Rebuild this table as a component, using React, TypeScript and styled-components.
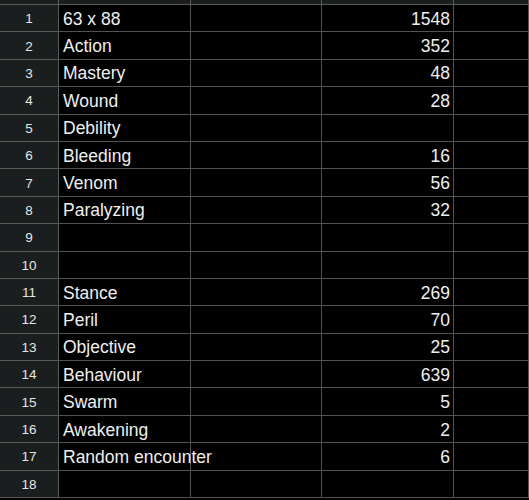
import React from 'react';
import styled, { createGlobalStyle } from 'styled-components';

const GlobalStyle = createGlobalStyle`
  html, body {
    margin: 0;
    padding: 0;
    background: #000000;
  }
  body {
    font-family: "Liberation Sans", Arial, sans-serif;
    color: #efefef;
  }
`

const Sheet = styled.div`
  display: flex;
  flex-direction: column;
  width: 529px;
  overflow: hidden;
`

const Row = styled.div<{ $head?: boolean }>`
  display: grid;
  grid-template-columns: 59px 132px 131px 132px 1fr;
  height: ${p => (p.$head ? '5px' : '27.4px')};
  background: ${p => (p.$head ? '#1b1e1e' : '#000000')};
`

const RowNum = styled.div`
  display: flex;
  align-items: center;
  justify-content: center;
  background: #1b1e1e;
  border-right: 1px solid #5a5a5a;
  border-bottom: 1px solid #5a5a5a;
  font-size: 13.5px;
  color: #e6e6e6;
  padding-top: 1px;
`

const Cell = styled.div<{ $num?: boolean }>`
  display: flex;
  align-items: center;
  justify-content: ${p => (p.$num ? 'flex-end' : 'flex-start')};
  padding: 2px ${p => (p.$num ? '3px' : '0')} 0 ${p => (p.$num ? '0' : '4px')};
  border-right: 1px solid #525252;
  border-bottom: 1px solid #525252;
  font-size: 17.5px;
  white-space: nowrap;
  min-width: 0;
`

const HeadCell = styled.div`
  border-right: 1px solid #5a5a5a;
  border-bottom: 1px solid #5a5a5a;
`

const data: [string, string][] = [
  ['63 x 88', '1548'],
  ['Action', '352'],
  ['Mastery', '48'],
  ['Wound', '28'],
  ['Debility', ''],
  ['Bleeding', '16'],
  ['Venom', '56'],
  ['Paralyzing', '32'],
  ['', ''],
  ['', ''],
  ['Stance', '269'],
  ['Peril', '70'],
  ['Objective', '25'],
  ['Behaviour', '639'],
  ['Swarm', '5'],
  ['Awakening', '2'],
  ['Random encounter', '6'],
  ['', ''],
];

export default function App() {
  return (
    <>
      <GlobalStyle />
      <Sheet>
        <Row $head>
          <HeadCell />
          <HeadCell />
          <HeadCell />
          <HeadCell />
          <HeadCell />
        </Row>
        {data.map(([label, value], i) => (
          <Row key={i}>
            <RowNum>{i + 1}</RowNum>
            <Cell>{label}</Cell>
            <Cell />
            <Cell $num>{value}</Cell>
            <Cell />
          </Row>
        ))}
      </Sheet>
    </>
  );
}
